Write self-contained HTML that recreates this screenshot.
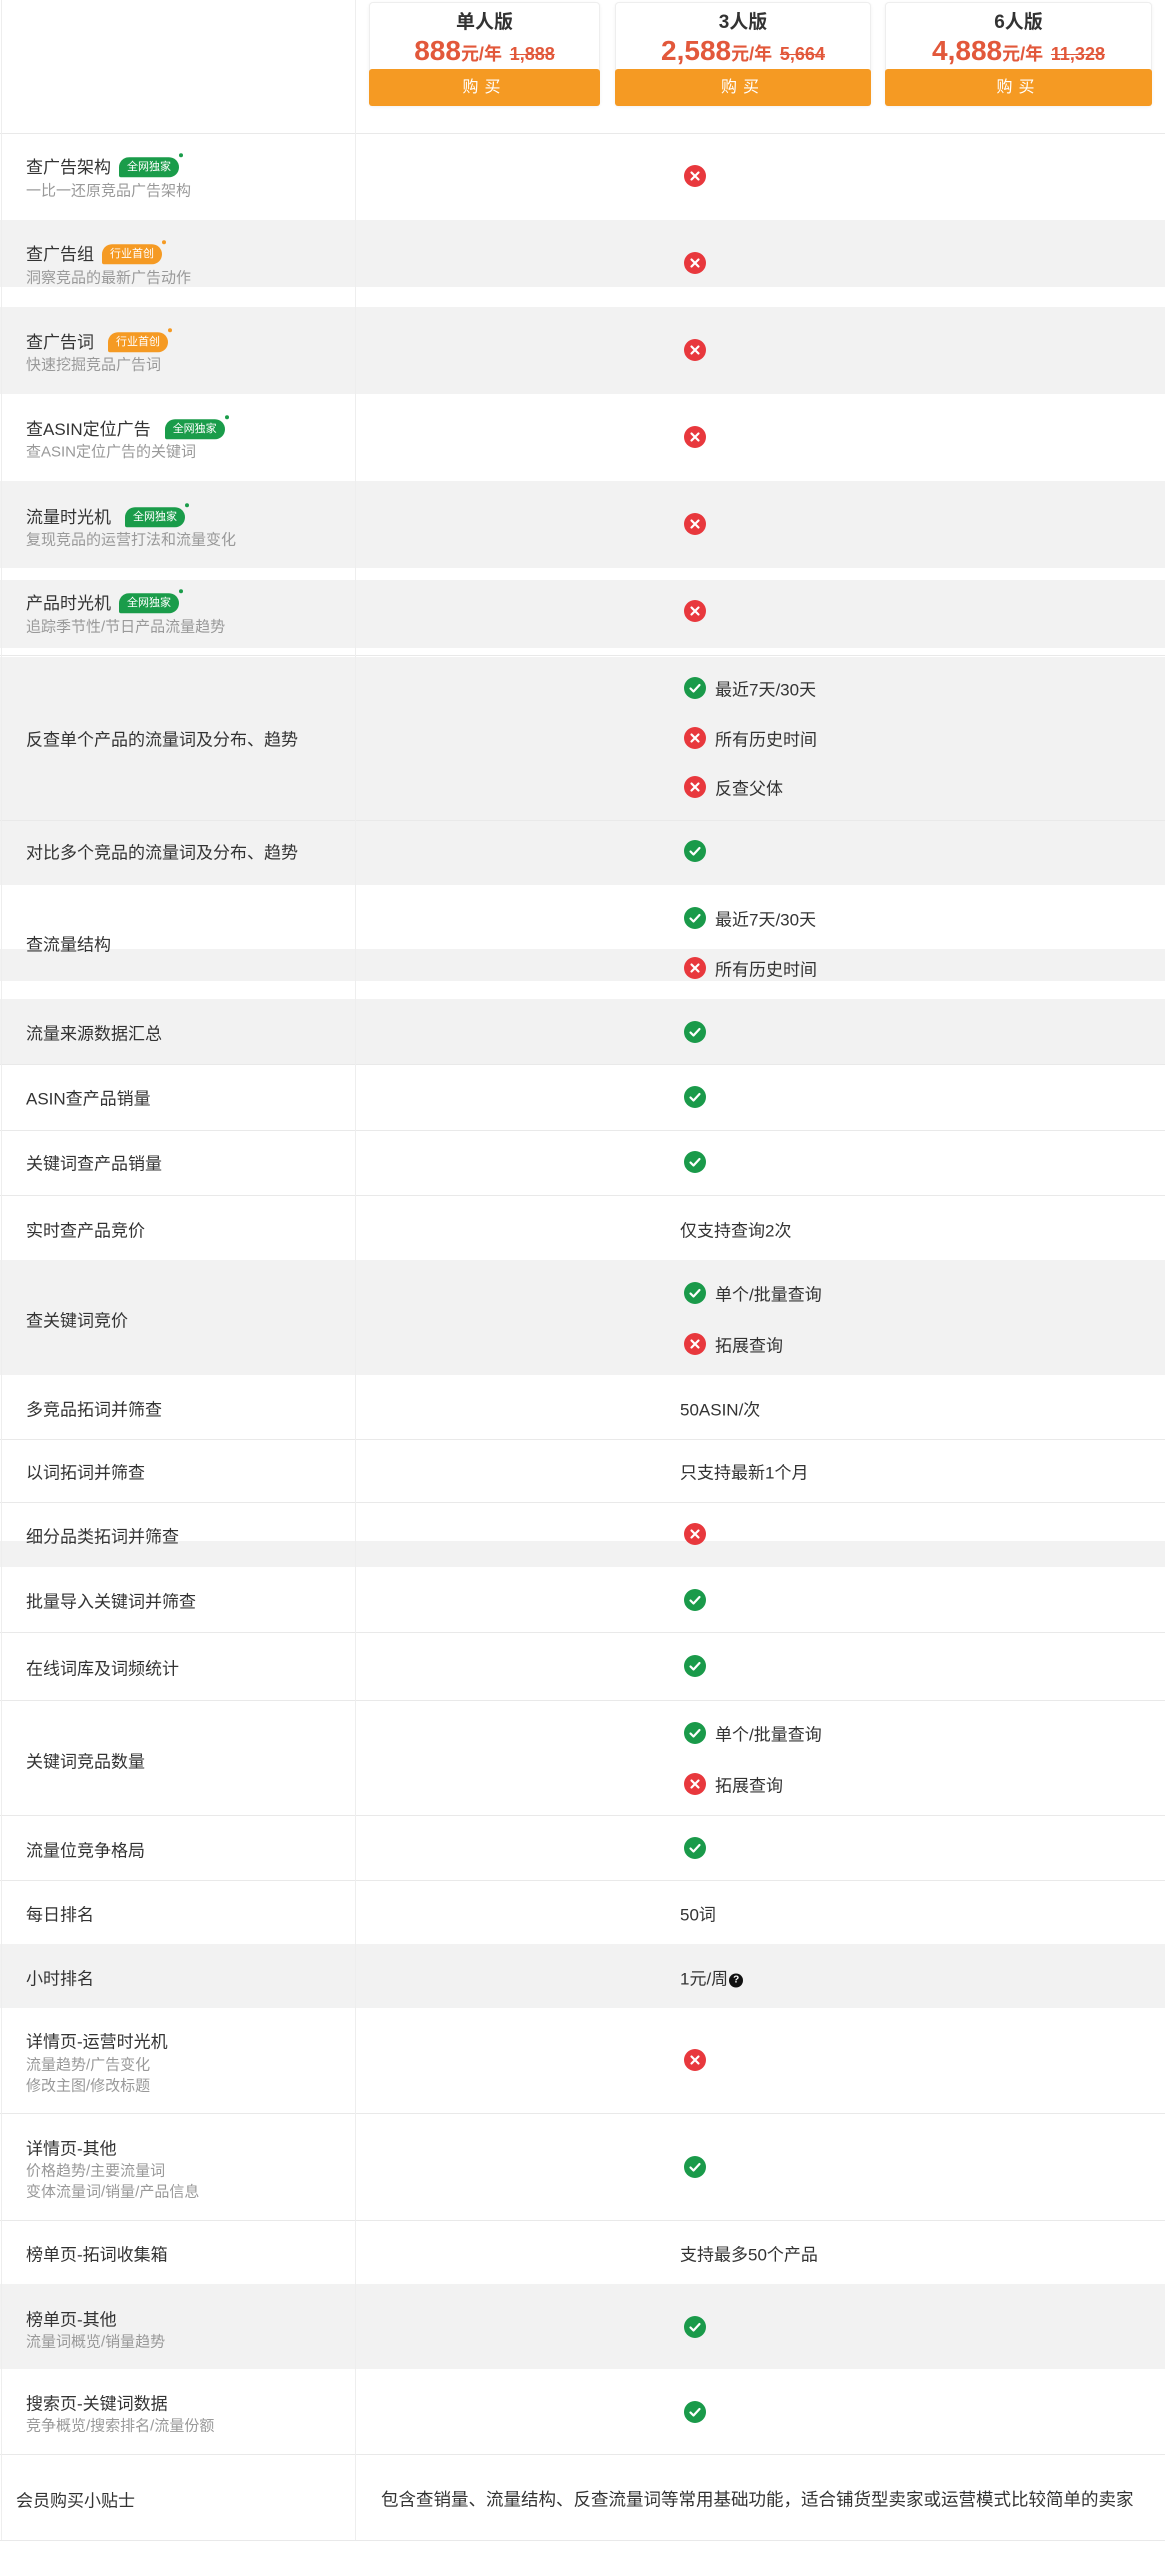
<!DOCTYPE html>
<html><head><meta charset="utf-8">
<style>
*{margin:0;padding:0;box-sizing:border-box}
body{width:1165px;height:2560px;position:relative;background:#fff;font-family:"Liberation Sans","Noto Sans CJK SC",sans-serif;color:#333;overflow:hidden}
.g{position:absolute;left:0;width:1165px;background:#f2f2f2}
.h{position:absolute;left:0;width:1165px;height:1px;background:#e9e9e9}
.v{position:absolute;left:355px;top:0;width:1px;height:2540px;background:#eeeeee}
.t{position:absolute;left:26px;font-size:17px;transform:translateY(-50%);white-space:nowrap;color:#333}
.s{position:absolute;left:26px;font-size:15px;color:#999;transform:translateY(-50%);white-space:nowrap}
.i{position:absolute;left:684px;width:22px;height:22px;transform:translateY(-50%)}
.l{position:absolute;left:715px;font-size:17px;transform:translateY(-50%);white-space:nowrap}
.val{position:absolute;left:680px;font-size:17px;transform:translateY(-50%);white-space:nowrap}
.b{display:inline-block;vertical-align:middle;margin-left:8px;height:20px;line-height:20px;padding:0 8px;border-radius:10px 10px 10px 2px;font-size:11px;color:#fff;position:relative;top:-2px}
.b:after{content:"";position:absolute;right:-4px;top:-4px;width:4px;height:4px;border-radius:50%;background:inherit}
.gr{background:#1a9c4a}.or{background:#f59a23}
.card{position:absolute;top:2px;height:104px;border:1px solid #eee;border-radius:4px;background:#fff;box-shadow:0 1px 3px rgba(0,0,0,.06);text-align:center}
.card .n{font-size:19px;font-weight:bold;margin-top:8px;line-height:24px}
.card .p{color:#e2583b;font-weight:bold;font-size:28px;line-height:34px;margin-top:-1px}
.card .p small{font-size:18px}
.card .p del{font-size:18px}
.card .btn{position:absolute;left:-1px;right:-1px;bottom:-1px;height:37px;background:#f59a23;color:#fff;font-size:16px;line-height:37px;border-radius:3px;letter-spacing:6px}
</style></head><body>
<svg width="0" height="0" style="position:absolute">
<defs>
<symbol id="x" viewBox="0 0 22 22"><circle cx="11" cy="11" r="11" fill="#e8383d"/><path d="M7.5 7.5l7 7M14.5 7.5l-7 7" stroke="#fff" stroke-width="2.2" stroke-linecap="round"/></symbol>
<symbol id="c" viewBox="0 0 22 22"><circle cx="11" cy="11" r="11" fill="#1a9a4a"/><path d="M6.5 11.5l3 3 6-6.5" stroke="#fff" stroke-width="2.2" fill="none" stroke-linecap="round" stroke-linejoin="round"/></symbol>
</defs></svg>

<div class="g" style="top:220px;height:67px"></div>
<div class="g" style="top:307px;height:87px"></div>
<div class="g" style="top:481px;height:87px"></div>
<div class="g" style="top:580px;height:68px"></div>
<div class="g" style="top:657px;height:228px"></div>
<div class="g" style="top:949px;height:32px"></div>
<div class="g" style="top:999px;height:65px"></div>
<div class="g" style="top:1260px;height:115px"></div>
<div class="g" style="top:1541px;height:26px"></div>
<div class="g" style="top:1944px;height:64px"></div>
<div class="g" style="top:2284px;height:85px"></div>

<div class="h" style="top:133px"></div>
<div class="h" style="top:655px"></div>
<div class="h" style="top:820px"></div>
<div class="h" style="top:1064px"></div>
<div class="h" style="top:1130px"></div>
<div class="h" style="top:1195px"></div>
<div class="h" style="top:1439px"></div>
<div class="h" style="top:1502px"></div>
<div class="h" style="top:1632px"></div>
<div class="h" style="top:1700px"></div>
<div class="h" style="top:1815px"></div>
<div class="h" style="top:1880px"></div>
<div class="h" style="top:2113px"></div>
<div class="h" style="top:2220px"></div>
<div class="h" style="top:2454px"></div>
<div class="h" style="top:2540px"></div>
<div class="v"></div>
<div class="v" style="left:1px"></div>

<div class="card" style="left:369px;width:231px"><div class="n">单人版</div><div class="p">888<small>元/年</small> <del>1,888</del></div><div class="btn">购买</div></div>
<div class="card" style="left:615px;width:256px"><div class="n">3人版</div><div class="p">2,588<small>元/年</small> <del>5,664</del></div><div class="btn">购买</div></div>
<div class="card" style="left:885px;width:267px"><div class="n">6人版</div><div class="p">4,888<small>元/年</small> <del>11,328</del></div><div class="btn">购买</div></div>

<div class="t" style="top:166px">查广告架构<span class="b gr">全网独家</span></div><div class="s" style="top:190px">一比一还原竞品广告架构</div><svg class="i" style="top:176px"><use href="#x"/></svg>
<div class="t" style="top:253px">查广告组<span class="b or">行业首创</span></div><div class="s" style="top:277px">洞察竞品的最新广告动作</div><svg class="i" style="top:263px"><use href="#x"/></svg>
<div class="t" style="top:341px">查广告词<span class="b or" style="margin-left:14px">行业首创</span></div><div class="s" style="top:364px">快速挖掘竞品广告词</div><svg class="i" style="top:350px"><use href="#x"/></svg>
<div class="t" style="top:428px">查ASIN定位广告<span class="b gr" style="margin-left:14px">全网独家</span></div><div class="s" style="top:451px">查ASIN定位广告的关键词</div><svg class="i" style="top:437px"><use href="#x"/></svg>
<div class="t" style="top:516px">流量时光机<span class="b gr" style="margin-left:14px">全网独家</span></div><div class="s" style="top:539px">复现竞品的运营打法和流量变化</div><svg class="i" style="top:524px"><use href="#x"/></svg>
<div class="t" style="top:602px">产品时光机<span class="b gr">全网独家</span></div><div class="s" style="top:626px">追踪季节性/节日产品流量趋势</div><svg class="i" style="top:611px"><use href="#x"/></svg>

<div class="t" style="top:738px">反查单个产品的流量词及分布、趋势</div>
<svg class="i" style="top:688px"><use href="#c"/></svg><div class="l" style="top:688px">最近7天/30天</div>
<svg class="i" style="top:738px"><use href="#x"/></svg><div class="l" style="top:738px">所有历史时间</div>
<svg class="i" style="top:787px"><use href="#x"/></svg><div class="l" style="top:787px">反查父体</div>
<div class="t" style="top:851px">对比多个竞品的流量词及分布、趋势</div><svg class="i" style="top:851px"><use href="#c"/></svg>
<div class="t" style="top:943px">查流量结构</div>
<svg class="i" style="top:918px"><use href="#c"/></svg><div class="l" style="top:918px">最近7天/30天</div>
<svg class="i" style="top:968px"><use href="#x"/></svg><div class="l" style="top:968px">所有历史时间</div>

<div class="t" style="top:1032px">流量来源数据汇总</div><svg class="i" style="top:1032px"><use href="#c"/></svg>
<div class="t" style="top:1097px">ASIN查产品销量</div><svg class="i" style="top:1097px"><use href="#c"/></svg>
<div class="t" style="top:1162px">关键词查产品销量</div><svg class="i" style="top:1162px"><use href="#c"/></svg>
<div class="t" style="top:1229px">实时查产品竞价</div><div class="val" style="top:1229px">仅支持查询2次</div>
<div class="t" style="top:1319px">查关键词竞价</div>
<svg class="i" style="top:1293px"><use href="#c"/></svg><div class="l" style="top:1293px">单个/批量查询</div>
<svg class="i" style="top:1344px"><use href="#x"/></svg><div class="l" style="top:1344px">拓展查询</div>
<div class="t" style="top:1408px">多竞品拓词并筛查</div><div class="val" style="top:1408px">50ASIN/次</div>
<div class="t" style="top:1471px">以词拓词并筛查</div><div class="val" style="top:1471px">只支持最新1个月</div>
<div class="t" style="top:1535px">细分品类拓词并筛查</div><svg class="i" style="top:1534px"><use href="#x"/></svg>
<div class="t" style="top:1600px">批量导入关键词并筛查</div><svg class="i" style="top:1600px"><use href="#c"/></svg>
<div class="t" style="top:1667px">在线词库及词频统计</div><svg class="i" style="top:1666px"><use href="#c"/></svg>
<div class="t" style="top:1760px">关键词竞品数量</div>
<svg class="i" style="top:1733px"><use href="#c"/></svg><div class="l" style="top:1733px">单个/批量查询</div>
<svg class="i" style="top:1784px"><use href="#x"/></svg><div class="l" style="top:1784px">拓展查询</div>
<div class="t" style="top:1849px">流量位竞争格局</div><svg class="i" style="top:1848px"><use href="#c"/></svg>
<div class="t" style="top:1913px">每日排名</div><div class="val" style="top:1913px">50词</div>
<div class="t" style="top:1977px">小时排名</div><div class="val" style="top:1977px">1元/周<span style="display:inline-block;width:14px;height:14px;border-radius:50%;background:#111;color:#fff;font-size:10px;line-height:14px;text-align:center;font-weight:bold;vertical-align:middle;margin-left:1px">?</span></div>
<div class="t" style="top:2040px">详情页-运营时光机</div><div class="s" style="top:2064px">流量趋势/广告变化</div><div class="s" style="top:2085px">修改主图/修改标题</div><svg class="i" style="top:2060px"><use href="#x"/></svg>
<div class="t" style="top:2147px">详情页-其他</div><div class="s" style="top:2170px">价格趋势/主要流量词</div><div class="s" style="top:2191px">变体流量词/销量/产品信息</div><svg class="i" style="top:2167px"><use href="#c"/></svg>
<div class="t" style="top:2253px">榜单页-拓词收集箱</div><div class="val" style="top:2253px">支持最多50个产品</div>
<div class="t" style="top:2318px">榜单页-其他</div><div class="s" style="top:2341px">流量词概览/销量趋势</div><svg class="i" style="top:2327px"><use href="#c"/></svg>
<div class="t" style="top:2402px">搜索页-关键词数据</div><div class="s" style="top:2425px">竞争概览/搜索排名/流量份额</div><svg class="i" style="top:2412px"><use href="#c"/></svg>
<div class="t" style="top:2499px;left:16px">会员购买小贴士</div>
<div class="val" style="top:2499px;left:381px;font-size:17.5px">包含查销量、流量结构、反查流量词等常用基础功能，适合铺货型卖家或运营模式比较简单的卖家</div>
</body></html>
